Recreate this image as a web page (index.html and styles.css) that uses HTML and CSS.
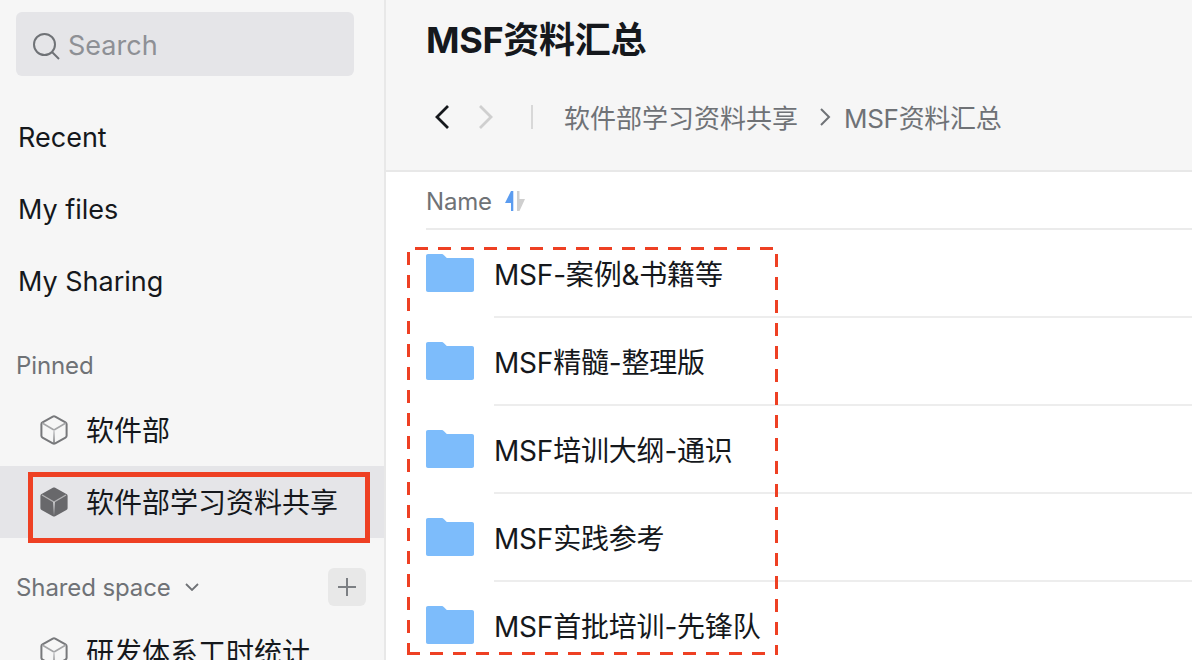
FILE: index.html
```html
<!DOCTYPE html>
<html lang="en">
<head>
    <meta charset="UTF-8">
    <meta name="viewport" content="width=device-width, initial-scale=1.0">
    <title>MSF资料汇总</title>
    <link rel="stylesheet" href="styles.css">
</head>
<body>

<svg class="icon-defs" width="0" height="0">
    <defs>
        <linearGradient id="cube-stem" x1="0" y1="0" x2="0" y2="1">
            <stop offset="0" stop-color="#d2d2d4"/>
            <stop offset="1" stop-color="#77787b"/>
        </linearGradient>
        <linearGradient id="cube-stem-solid" x1="0" y1="0" x2="0" y2="1">
            <stop offset="0" stop-color="#d8d8da"/>
            <stop offset="1" stop-color="#68686b"/>
        </linearGradient>
    </defs>
    <symbol id="cube" viewBox="0 0 28 30">
        <path d="M12.800 1.600C13.600 1.200 14.400 1.200 15.200 1.600L25.500 7.400C26.200 7.800 26.600 8.400 26.600 9.200V20.800C26.600 21.600 26.200 22.200 25.500 22.600L15.200 28.400C14.400 28.800 13.600 28.800 12.800 28.400L2.500 22.600C1.800 22.200 1.400 21.600 1.400 20.800V9.200C1.400 8.400 1.800 7.800 2.500 7.400Z" fill="none" stroke="#77787b" stroke-width="2"/>
        <path d="M2.200 8 14 15 25.800 8" fill="none" stroke="#a4a5a7" stroke-width="1.600"/>
        <rect x="13.200" y="15" width="1.600" height="13" fill="url(#cube-stem)"/>
    </symbol>
    <symbol id="cube-solid" viewBox="0 0 28 30">
        <path d="M12.800 .8C13.600 .4 14.400 .4 15.200 .8L26.400 7C27.200 7.400 27.600 8 27.600 8.800V21.200C27.600 22 27.200 22.600 26.400 23L15.200 29.200C14.400 29.600 13.600 29.600 12.800 29.200L1.600 23C.8 22.600 .4 22 .4 21.200V8.800C.4 8 .8 7.400 1.600 7Z" fill="#68686b"/>
        <path d="M2 8 14 15 26 8" fill="none" stroke="#b4b4b6" stroke-width="1.400"/>
        <rect x="13.200" y="15" width="1.600" height="14" fill="url(#cube-stem-solid)"/>
    </symbol>
    <symbol id="folder" viewBox="0 0 48 38">
        <path d="M2 0H15C16.500 0 17.300 .5 18 1.200L20.800 4H46C47.200 4 48 4.800 48 6V36C48 37.200 47.200 38 46 38H2C.8 38 0 37.200 0 36V2C0 .8 .8 0 2 0Z" fill="#7dbcfb"/>
    </symbol>
</svg>

<div class="app">
    <aside class="sidebar">
        <div class="search">
            <svg class="search-icon" width="28" height="28" viewBox="0 0 28 28">
                <circle cx="12.500" cy="12.500" r="10.500" fill="none" stroke="#6f7276" stroke-width="2"/>
                <path d="M20 20 27 27" stroke="#6f7276" stroke-width="2"/>
            </svg>
            <span>Search</span>
        </div>

        <nav class="nav">
            <a class="nav-item">Recent</a>
            <a class="nav-item">My files</a>
            <a class="nav-item">My Sharing</a>
        </nav>

        <div class="section-title">Pinned</div>
        <div class="space">
            <svg class="cube"><use href="#cube"/></svg>
            <span>软件部</span>
        </div>
        <div class="space selected">
            <svg class="cube"><use href="#cube-solid"/></svg>
            <span>软件部学习资料共享</span>
            <div class="mark-box"></div>
        </div>

        <div class="section-title shared">
            <span>Shared space</span>
            <svg class="caret" width="14" height="8" viewBox="0 0 14 8">
                <path d="M1 1 7 7 13 1" fill="none" stroke="#6f7276" stroke-width="1.800"/>
            </svg>
            <div class="add-btn">
                <svg width="20" height="20" viewBox="0 0 20 20">
                    <path d="M10 1V19M1 10H19" stroke="#7c7f83" stroke-width="2"/>
                </svg>
            </div>
        </div>
        <div class="space">
            <svg class="cube"><use href="#cube"/></svg>
            <span>研发体系工时统计</span>
        </div>
    </aside>

    <main class="main">
        <header class="top">
            <h1>MSF资料汇总</h1>
            <div class="crumbs">
                <svg class="arrow" width="16" height="26" viewBox="0 0 16 26">
                    <path d="M14 2 3 13 14 24" fill="none" stroke="#15181c" stroke-width="2.800"/>
                </svg>
                <svg class="arrow next" width="16" height="26" viewBox="0 0 16 26">
                    <path d="M2 2 13 13 2 24" fill="none" stroke="#cfcfcf" stroke-width="2.800"/>
                </svg>
                <div class="crumb-line"></div>
                <span>软件部学习资料共享</span>
                <svg class="crumb-sep" width="12" height="20" viewBox="0 0 12 20">
                    <path d="M2 2 10 10 2 18" fill="none" stroke="#6f7276" stroke-width="2"/>
                </svg>
                <span class="crumb-last">MSF资料汇总</span>
            </div>
        </header>

        <div class="list">
            <div class="list-head">
                <span>Name</span>
                <svg class="sort" width="20" height="20" viewBox="0 0 20 20">
                    <path d="M6 0H8.300V20H6V12H0Z" fill="#5b9cf0"/>
                    <path d="M12 0H14.500V8H20L14.500 20H12Z" fill="#cfcfcf"/>
                </svg>
            </div>

            <div class="row">
                <svg class="folder"><use href="#folder"/></svg>
                <div class="row-name">MSF-案例&amp;书籍等</div>
            </div>
            <div class="row">
                <svg class="folder"><use href="#folder"/></svg>
                <div class="row-name">MSF精髓-整理版</div>
            </div>
            <div class="row">
                <svg class="folder"><use href="#folder"/></svg>
                <div class="row-name">MSF培训大纲-通识</div>
            </div>
            <div class="row">
                <svg class="folder"><use href="#folder"/></svg>
                <div class="row-name">MSF实践参考</div>
            </div>
            <div class="row">
                <svg class="folder"><use href="#folder"/></svg>
                <div class="row-name">MSF首批培训-先锋队</div>
            </div>

            <!-- dashed annotation drawn over the list -->
            <svg class="mark-dashed" width="371" height="408" viewBox="0 0 371 408">
                <path d="M8 1.500H366" />
                <path d="M1.500 5V408" />
                <path d="M369.500 7V408" />
                <path d="M0 406.500H371" />
            </svg>
        </div>
    </main>
</div>

</body>
</html>
```

FILE: styles.css
```css
body {
    margin: 0;
    font-family: Inter, "Noto Sans CJK SC", sans-serif;
    color: #15181c;
    background-color: #fff;
}

.icon-defs {
    position: absolute;
}

.app {
    display: flex;
    height: 660px;
    overflow: hidden;
}

.sidebar {
    width: 384px;
    flex-shrink: 0;
    padding-top: 12px;
    box-sizing: content-box;
    background-color: #f6f6f6;
    border-right: 2px solid #e8e8e8;
}

.search {
    display: flex;
    align-items: center;
    gap: 8px;
    height: 64px;
    margin: 0 30px 0 16px;
    padding-left: 16px;
    background-color: #e5e5e8;
    border-radius: 6px;
    color: #8e9095;
    font-size: 27px;
}

.search span {
    padding-top: 2px;
}

.search-icon {
    margin-top: 3px;
}

.nav {
    margin-top: 25px;
}

.nav-item {
    display: flex;
    align-items: center;
    height: 72px;
    padding-left: 18px;
    font-size: 27px;
}

.section-title {
    display: flex;
    align-items: center;
    height: 40px;
    margin-top: 28px;
    padding-left: 16px;
    font-size: 24px;
    letter-spacing: -0.1px;
    color: #6f7276;
}

.space {
    position: relative;
    display: flex;
    align-items: center;
    gap: 18px;
    height: 72px;
    padding-left: 40px;
    font-size: 28px;
}

.space span {
    padding-bottom: 2px;
}

.section-title + .space {
    margin-top: 9px;
}

.cube {
    width: 28px;
    height: 30px;
}

.selected {
    background-color: #e5e5e8;
}

.mark-box {
    position: absolute;
    left: 28px;
    top: 6px;
    width: 332px;
    height: 61px;
    border: 5px solid #ee4023;
}

.shared {
    margin-top: 29px;
}

.caret {
    margin-left: 14px;
}

.add-btn {
    display: flex;
    align-items: center;
    justify-content: center;
    width: 38px;
    height: 38px;
    margin-left: auto;
    margin-right: 18px;
    background-color: #e8e8e8;
    border-radius: 6px;
}

.main {
    flex: 1;
    min-width: 0;
}

.top {
    height: 170px;
    padding-left: 41px;
    background-color: #f6f6f6;
    border-bottom: 2px solid #e8e8e8;
}

.top h1 {
    margin: 0 0 0 -1px;
    padding-top: 16px;
    font-size: 36px;
    letter-spacing: -0.3px;
    line-height: 48px;
    font-weight: 700;
}

.crumbs {
    display: flex;
    align-items: center;
    height: 44px;
    margin-top: 31px;
    font-size: 26px;
    color: #6f7276;
}

.crumbs span {
    padding-bottom: 2px;
}

.crumb-last {
    letter-spacing: -0.3px;
}

.arrow {
    margin-left: 7px;
}

.arrow.next {
    margin-left: 28px;
}

.crumb-line {
    width: 2px;
    height: 24px;
    margin: 0 31px 0 37px;
    background-color: #d8d8d8;
}

.crumb-sep {
    margin: 0 13px 0 21px;
}

.list {
    position: relative;
}

.list-head {
    display: flex;
    align-items: center;
    gap: 13px;
    height: 58px;
    box-sizing: border-box;
    margin-left: 40px;
    padding-top: 2px;
    font-size: 24px;
    letter-spacing: -0.2px;
    color: #6f7276;
    border-bottom: 2px solid #ebebeb;
}

.row {
    display: flex;
    align-items: center;
    height: 88px;
    padding-left: 40px;
    box-sizing: border-box;
}

.folder {
    width: 48px;
    height: 38px;
    flex-shrink: 0;
    margin-bottom: 2px;
}

.row-name {
    flex: 1;
    display: flex;
    align-items: center;
    align-self: stretch;
    margin-left: 20px;
    font-size: 28px;
    letter-spacing: -0.2px;
    border-bottom: 2px solid #ededed;
}

.mark-dashed {
    position: absolute;
    left: 21px;
    top: 75px;
}

.mark-dashed path {
    fill: none;
    stroke: #ee4023;
    stroke-width: 3;
    stroke-dasharray: 13 10;
}
```
